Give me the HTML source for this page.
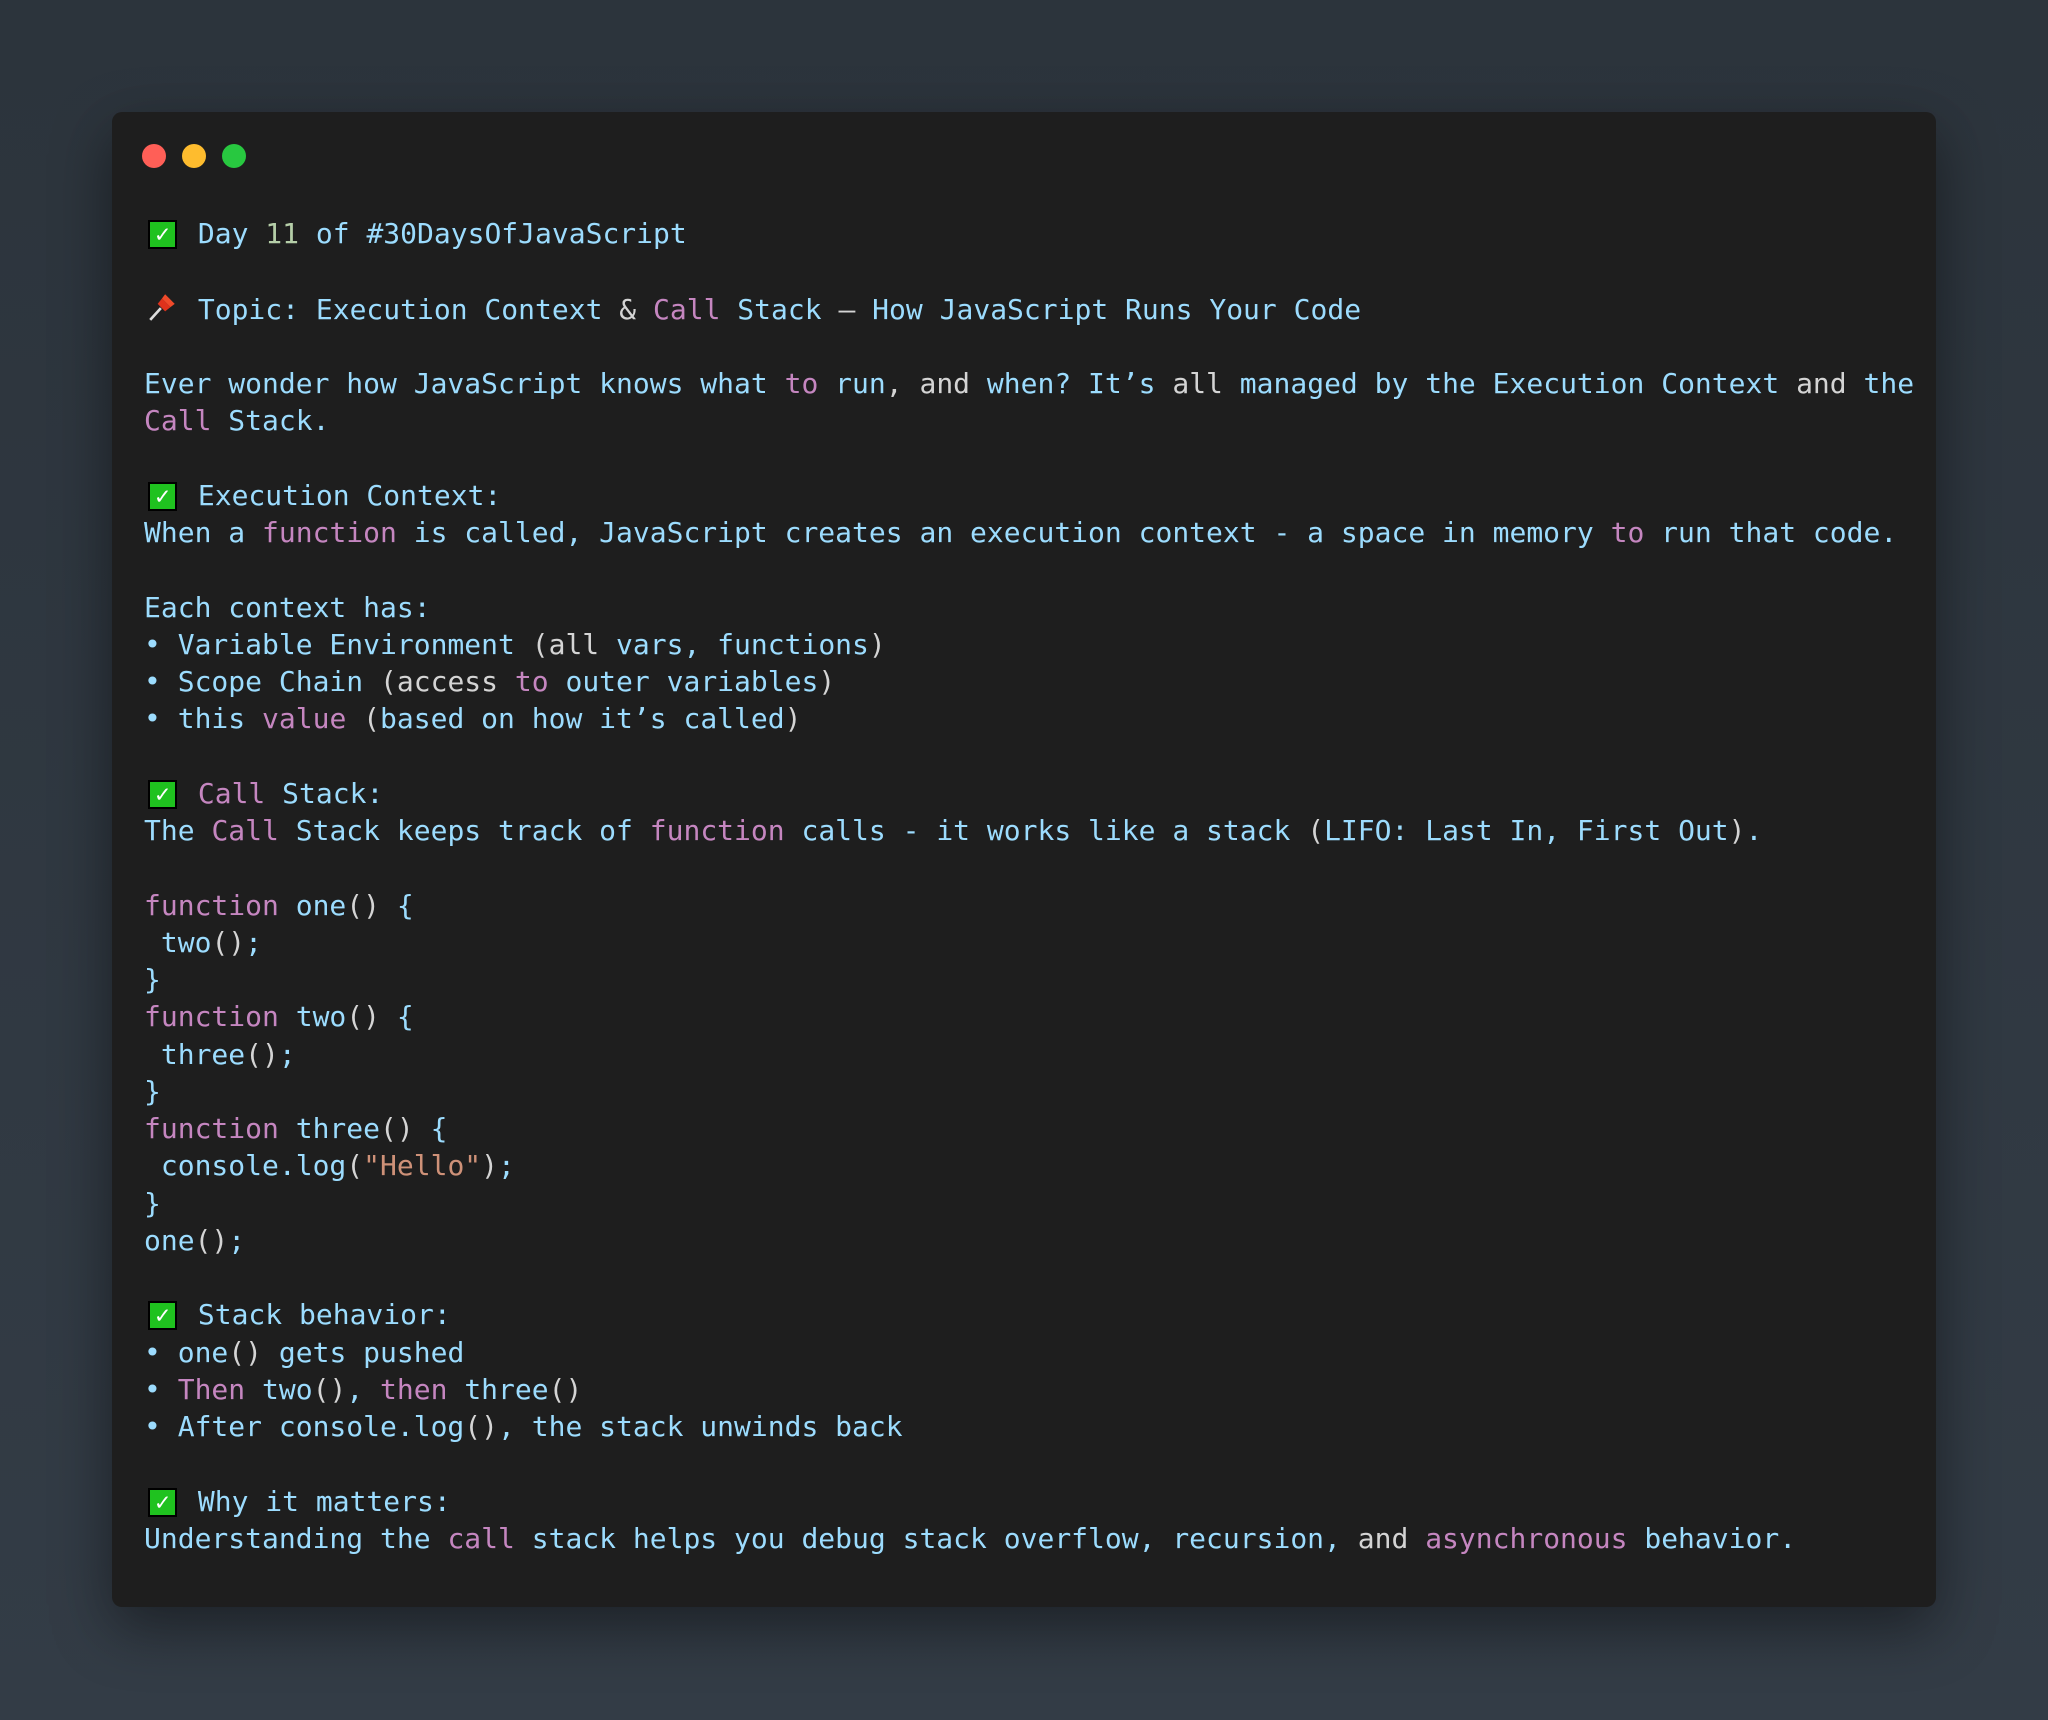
<!DOCTYPE html>
<html><head><meta charset="utf-8"><style>
html,body{margin:0;padding:0}
body{width:2048px;height:1720px;background:linear-gradient(180deg,#2c343c,#333c46);position:relative;overflow:hidden}
.win{position:absolute;left:112px;top:112px;width:1824px;height:1495px;background:#1e1e1e;border-radius:10px;box-shadow:0 20px 60px rgba(0,0,0,.45)}
.dot{position:absolute;top:32px;width:24px;height:24px;border-radius:50%}
pre{position:absolute;left:144px;top:215px;margin:0;font-family:"DejaVu Sans Mono","Liberation Mono",monospace;font-size:28px;line-height:37.25px;color:#9cdcfe;white-space:pre}
.p{color:#c586c0}.w{color:#d4d4d4}.o{color:#ce9178}.n{color:#b5cea8}
.ck{display:inline-block;width:29px;height:29px;background:#1fc21f;border:2px solid #000;box-sizing:border-box;vertical-align:1px;margin-left:4px;margin-right:4px;color:#fff;font-size:24px;line-height:25px;text-align:center;font-weight:bold}
.pin{display:inline-block;width:32px;margin-left:3px;margin-right:2px;vertical-align:-3px}
</style></head><body>
<div class="win">
<div class="dot" style="left:30px;background:#ff5f57"></div>
<div class="dot" style="left:70px;background:#febc2e"></div>
<div class="dot" style="left:110px;background:#28c840"></div>
</div>
<pre><span class="ck">✓</span> Day <span class="n">11</span> of #30DaysOfJavaScript

<svg class="pin" width="32" height="32" viewBox="0 0 30 30"><path d="M3 28 L13 17" stroke="#ddd" stroke-width="2.5"/><path d="M14 8 L22 16 L17 20 L10 13 Z" fill="#e0321c"/><path d="M17 4 L26 13 L22 16 L14 8 Z" fill="#f04a2a"/></svg> Topic: Execution Context <span class="w">&amp;</span> <span class="p">Call</span> Stack <span class="w">—</span> How JavaScript Runs Your Code

Ever wonder how JavaScript knows what <span class="p">to</span> run<span class="w">,</span> <span class="w">and</span> when? It’s <span class="w">all</span> managed by the Execution Context <span class="w">and</span> the
<span class="p">Call</span> Stack.

<span class="ck">✓</span> Execution Context:
When a <span class="p">function</span> is called, JavaScript creates an execution context - a space in memory <span class="p">to</span> run that code.

Each context has:
• Variable Environment <span class="w">(all</span> vars, functions<span class="w">)</span>
• Scope Chain <span class="w">(access</span> <span class="p">to</span> outer variables<span class="w">)</span>
• this <span class="p">value</span> <span class="w">(</span>based on how it’s called<span class="w">)</span>

<span class="ck">✓</span> <span class="p">Call</span> Stack:
The <span class="p">Call</span> Stack keeps track of <span class="p">function</span> calls - it works like a stack <span class="w">(</span>LIFO: Last In, First Out<span class="w">)</span>.

<span class="p">function</span> one<span class="w">()</span> {
 two<span class="w">()</span>;
}
<span class="p">function</span> two<span class="w">()</span> {
 three<span class="w">()</span>;
}
<span class="p">function</span> three<span class="w">()</span> {
 console.log<span class="w">(</span><span class="o">"Hello"</span><span class="w">)</span>;
}
one<span class="w">()</span>;

<span class="ck">✓</span> Stack behavior:
• one<span class="w">()</span> gets pushed
• <span class="p">Then</span> two<span class="w">()</span>, <span class="p">then</span> three<span class="w">()</span>
• After console.log<span class="w">()</span>, the stack unwinds back

<span class="ck">✓</span> Why it matters:
Understanding the <span class="p">call</span> stack helps you debug stack overflow, recursion, <span class="w">and</span> <span class="p">asynchronous</span> behavior.</pre>
</body></html>
